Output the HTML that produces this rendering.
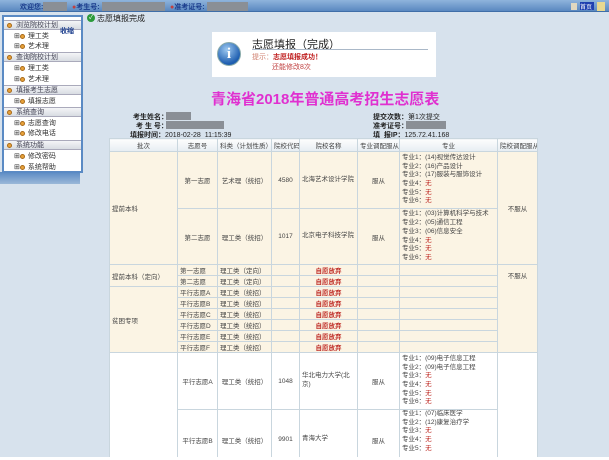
<!DOCTYPE html>
<html><head><meta charset="utf-8"><style>
*{margin:0;padding:0;box-sizing:border-box}
body{width:609px;height:460px;overflow:hidden;background:#fff;font-family:"Liberation Sans","Noto Sans CJK SC",sans-serif;position:relative;color:#333}
.a{position:absolute;white-space:nowrap}
#bg{position:absolute;left:0;top:0;width:609px;height:457px;background:#d7e2ed}
#top{position:absolute;left:0;top:0;width:609px;height:12px;background:linear-gradient(#8fb4dc,#5a88c0);border-bottom:1px solid #3f6ea8}
.gb{position:absolute;top:2px;height:9px;background:#8a8f96}
.tl{font-size:7px;color:#1a3c8c;font-weight:bold;top:2px}
#side{position:absolute;left:2px;top:15px;width:81px;height:158px;background:#fff;border:2px solid #5a8ac4}
#sideb{position:absolute;left:0;top:172px;width:80px;height:12px;background:linear-gradient(#5a8ac4,#9ab8d8)}
.sh{position:absolute;left:0;width:77px;height:10px;background:linear-gradient(#f4f5f7,#d8dce2);border-top:1px solid #aab;border-bottom:1px solid #aab;font-size:7px;color:#445;padding-left:12px;line-height:9px}
.si{position:absolute;left:10px;font-size:7px;color:#333}
.dot{display:inline-block;width:5px;height:5px;border-radius:50%;background:#e8a23a;border:1px solid #a86a1a;margin-right:3px;vertical-align:middle}
.sh .dot{position:absolute;left:3px;top:2px}
#tw{position:absolute;left:109px;top:138px;width:430px;height:319px;overflow:hidden}
table{width:428px;border-collapse:collapse;table-layout:fixed;font-size:6.5px;color:#444}
td{border:1px solid #c9d6de;vertical-align:middle;padding:0 2px;overflow:hidden;white-space:nowrap}
tr.h td{background:linear-gradient(#fdfdfd,#e6edf2);text-align:center;height:13px}
.bz td{background:#fbf4e4}
.w td{background:#fff}
.r{color:#c0302a;font-weight:bold;text-align:center}
.n{color:#c0302a}
.c{text-align:center}
.z{line-height:8.7px;white-space:normal}
.m{line-height:8.7px;white-space:nowrap}
</style></head><body>
<div id="bg"></div>
<div id="top"></div>
<div class="a tl" style="left:20px">欢迎您:</div>
<div class="gb" style="left:43px;width:24px"></div>
<div class="a tl" style="left:72px;color:#c04040">●<span style="color:#1a3c8c">考生号:</span></div>
<div class="gb" style="left:102px;width:63px"></div>
<div class="a tl" style="left:170px;color:#c04040">●<span style="color:#1a3c8c">准考证号:</span></div>
<div class="gb" style="left:207px;width:41px"></div>
<div class="a" style="left:571px;top:3px;width:6px;height:7px;background:#e0d8c0"></div>
<div class="a" style="left:580px;top:2px;width:14px;height:8px;background:#2040b0;font-size:6px;color:#fff">首页</div>
<div class="a" style="left:597px;top:2px;width:8px;height:9px;background:#e8d890"></div>

<div id="sideb"></div>
<div id="side">
<div class="sh" style="top:3px"><span class="dot"></span>浏览院校计划</div>
<div class="a" style="left:56px;top:9px;font-size:7px;font-weight:bold;color:#1a3c8c">收缩</div>
<div class="si" style="top:14px">⊞<span class="dot"></span>理工类</div>
<div class="si" style="top:24px">⊞<span class="dot"></span>艺术理</div>
<div class="sh" style="top:35px"><span class="dot"></span>查询院校计划</div>
<div class="si" style="top:46px">⊞<span class="dot"></span>理工类</div>
<div class="si" style="top:57px">⊞<span class="dot"></span>艺术理</div>
<div class="sh" style="top:68px"><span class="dot"></span>填报考生志愿</div>
<div class="si" style="top:79px">⊞<span class="dot"></span>填报志愿</div>
<div class="sh" style="top:90px"><span class="dot"></span>系统查询</div>
<div class="si" style="top:101px">⊞<span class="dot"></span>志愿查询</div>
<div class="si" style="top:111px">⊞<span class="dot"></span>修改电话</div>
<div class="sh" style="top:123px"><span class="dot"></span>系统功能</div>
<div class="si" style="top:134px">⊞<span class="dot"></span>修改密码</div>
<div class="si" style="top:145px">⊞<span class="dot"></span>系统帮助</div>
</div>

<div class="a" style="left:87px;top:14px;width:8px;height:8px;border-radius:50%;background:#2a9a3a;color:#fff;font-size:6px;text-align:center;line-height:8px">✓</div>
<div class="a" style="left:97px;top:13px;font-size:8px;color:#222">志愿填报完成</div>

<div class="a" style="left:212px;top:32px;width:224px;height:45px;background:#fff"></div>
<div class="a" style="left:217px;top:42px;width:24px;height:24px;border-radius:50%;background:radial-gradient(circle at 40% 30%,#9cc8f0,#1e5eb0 70%);border:1px solid #8aa;color:#fff;font:bold 15px 'Liberation Serif',serif;text-align:center;line-height:23px">i</div>
<div class="a" style="left:252px;top:36px;font-size:11px;color:#222">志愿填报（完成）</div>
<div class="a" style="left:252px;top:49px;width:176px;height:1px;background:#aab8c8"></div>
<div class="a" style="left:252px;top:52px;font-size:7px;color:#d08070">提示：<b style="color:#c02020">志愿填报成功！</b></div>
<div class="a" style="left:272px;top:62px;font-size:7px;color:#c04040">还能修改8次</div>

<div class="a" style="left:211px;top:88px;font-size:15px;font-weight:bold;color:#e030d0">青海省2018年普通高考招生志愿表</div>

<div class="a" style="left:133px;top:112px;font-size:7px;font-weight:bold;color:#222">考生姓名：</div>
<div class="gb" style="left:166px;top:112px;width:25px;height:8px"></div>
<div class="a" style="left:136px;top:121px;font-size:7px;font-weight:bold;color:#222">考 生 号：</div>
<div class="gb" style="left:166px;top:121px;width:58px;height:8px"></div>
<div class="a" style="left:130px;top:130px;font-size:7px;color:#222"><b>填报时间：</b>2018-02-28&nbsp; 11:15:39</div>
<div class="a" style="left:373px;top:112px;font-size:7px;color:#222"><b>提交次数：</b>第1次提交</div>
<div class="a" style="left:373px;top:121px;font-size:7px;color:#222"><b>准考证号：</b></div>
<div class="gb" style="left:406px;top:121px;width:40px;height:8px"></div>
<div class="a" style="left:373px;top:130px;font-size:7px;color:#222"><b>填 &nbsp;报IP：</b>125.72.41.168</div>

<div id="tw"><table>
<colgroup><col style="width:68px"><col style="width:40px"><col style="width:54px"><col style="width:28px"><col style="width:58px"><col style="width:42px"><col style="width:98px"><col style="width:40px"></colgroup>
<tr class="h"><td>批次</td><td>志愿号</td><td>科类（计划性质）</td><td>院校代码</td><td>院校名称</td><td>专业调配服从</td><td>专业</td><td>院校调配服从</td></tr>
<tr class="bz"><td rowspan="2">提前本科</td><td class="c" style="height:57px">第一志愿</td><td class="c">艺术理（统招）</td><td class="c">4580</td><td class="z">北海艺术设计学院</td><td class="c">服从</td><td class="m">专业1：(14)视觉传达设计<br>专业2：(16)产品设计<br>专业3：(17)服装与服饰设计<br>专业4：<span class="n">无</span><br>专业5：<span class="n">无</span><br>专业6：<span class="n">无</span></td><td rowspan="2" class="c">不服从</td></tr>
<tr class="bz"><td class="c" style="height:56px">第二志愿</td><td class="c">理工类（统招）</td><td class="c">1017</td><td class="z">北京电子科技学院</td><td class="c">服从</td><td class="m">专业1：(03)计算机科学与技术<br>专业2：(05)通信工程<br>专业3：(06)信息安全<br>专业4：<span class="n">无</span><br>专业5：<span class="n">无</span><br>专业6：<span class="n">无</span></td></tr>
<tr class="bz"><td rowspan="2">提前本科（定向）</td><td style="height:11px">第一志愿</td><td>理工类（定向）</td><td></td><td class="r">自愿放弃</td><td></td><td></td><td rowspan="8" class="c" style="vertical-align:top;padding-top:5px">不服从</td></tr>
<tr class="bz"><td style="height:11px">第二志愿</td><td>理工类（定向）</td><td></td><td class="r">自愿放弃</td><td></td><td></td></tr>
<tr class="bz"><td rowspan="6">贫困专项</td><td style="height:10.5px">平行志愿A</td><td>理工类（统招）</td><td></td><td class="r">自愿放弃</td><td></td><td></td></tr>
<tr class="bz"><td style="height:10.5px">平行志愿B</td><td>理工类（统招）</td><td></td><td class="r">自愿放弃</td><td></td><td></td></tr>
<tr class="bz"><td style="height:10.5px">平行志愿C</td><td>理工类（统招）</td><td></td><td class="r">自愿放弃</td><td></td><td></td></tr>
<tr class="bz"><td style="height:10.5px">平行志愿D</td><td>理工类（统招）</td><td></td><td class="r">自愿放弃</td><td></td><td></td></tr>
<tr class="bz"><td style="height:10.5px">平行志愿E</td><td>理工类（统招）</td><td></td><td class="r">自愿放弃</td><td></td><td></td></tr>
<tr class="bz"><td style="height:10px">平行志愿F</td><td>理工类（统招）</td><td></td><td class="r">自愿放弃</td><td></td><td></td></tr>
<tr class="w"><td rowspan="2"></td><td class="c" style="height:57px">平行志愿A</td><td class="c">理工类（统招）</td><td class="c">1048</td><td class="z">华北电力大学(北京)</td><td class="c">服从</td><td class="m">专业1：(09)电子信息工程<br>专业2：(09)电子信息工程<br>专业3：<span class="n">无</span><br>专业4：<span class="n">无</span><br>专业5：<span class="n">无</span><br>专业6：<span class="n">无</span></td><td rowspan="2"></td></tr>
<tr class="w"><td class="c" style="height:60px">平行志愿B</td><td class="c">理工类（统招）</td><td class="c">9901</td><td class="z">青海大学</td><td class="c">服从</td><td class="m" style="vertical-align:top">专业1：(07)临床医学<br>专业2：(12)康复治疗学<br>专业3：<span class="n">无</span><br>专业4：<span class="n">无</span><br>专业5：<span class="n">无</span></td></tr>
</table></div>
</body></html>
